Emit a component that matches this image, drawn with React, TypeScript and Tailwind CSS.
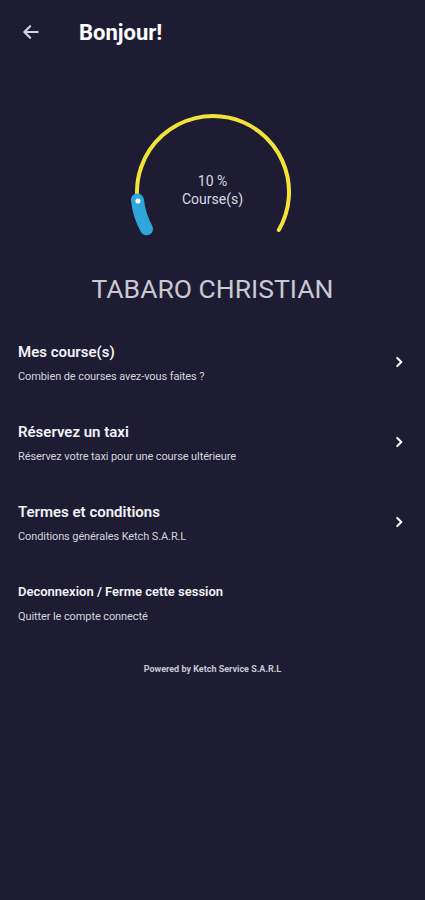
import React from "react";

const items = [
  { t: "Mes course(s)", s: "Combien de courses avez-vous faites ?", chev: true, small: false },
  { t: "Réservez un taxi", s: "Réservez votre taxi pour une course ultérieure", chev: true, small: false },
  { t: "Termes et conditions", s: "Conditions générales Ketch S.A.R.L", chev: true, small: false },
  { t: "Deconnexion / Ferme cette session", s: "Quitter le compte connecté", chev: false, small: true },
];

function pt(cx: number, cy: number, r: number, deg: number) {
  const a = (deg * Math.PI) / 180;
  return [cx + r * Math.cos(a), cy - r * Math.sin(a)];
}

function Gauge() {
  const cx = 80, cy = 80, r = 76;
  const [ys, yy] = pt(cx, cy, r, 186);
  const [ye, yey] = pt(cx, cy, r, -30);
  const [bs, bsy] = pt(cx, cy, r, 209);
  const [be, bey] = pt(cx, cy, r, 186);
  return (
    <svg width="180" height="140" viewBox="-10 -6 180 140">
      <path d={`M ${ys} ${yy} A ${r} ${r} 0 1 1 ${ye} ${yey}`} fill="none" stroke="#f2e33a" strokeWidth="4" strokeLinecap="round" />
      <path d={`M ${bs} ${bsy} A ${r} ${r} 0 0 1 ${be} ${bey}`} fill="none" stroke="#2ea6da" strokeWidth="13" strokeLinecap="round" />
      <circle cx={be + 0.5} cy={bey + 1} r="2.5" fill="#ffffff" />
    </svg>
  );
}

export default function App() {
  return (
    <div className="w-[425px] h-[900px] bg-[#1e1c32] text-white" style={{ fontFamily: "Roboto, 'Liberation Sans', sans-serif" }}>
      <div className="h-[64px] flex items-center pl-[21px]">
        <svg width="20" height="20" viewBox="0 0 24 24" fill="none" stroke="#d4d4e0" strokeWidth="2.6" strokeLinecap="round" strokeLinejoin="round">
          <path d="M20 12H5" />
          <path d="M11 5l-7 7 7 7" />
        </svg>
        <span className="ml-[38px] text-[22px] font-bold text-white">Bonjour!</span>
      </div>
      <div className="flex justify-center mt-[42px]">
        <div className="relative w-[180px] h-[140px]">
          <Gauge />
          <div className="absolute left-0 right-0 top-[66px] flex flex-col items-center text-[14px] leading-[18px] text-[#d8d8e2]">
            <span>10 %</span>
            <span>Course(s)</span>
          </div>
        </div>
      </div>
      <div className="text-center text-[26.5px] text-[#c9c9d4] mt-[28px] leading-[30px]">TABARO CHRISTIAN</div>
      <div className="mt-[38px] flex flex-col">
        {items.map((it) => (
          <div key={it.t} className="h-[80px] flex items-start pl-[18px] pr-[19px]">
            <div className="flex-1 flex flex-col">
              <span className={`${it.small ? "text-[13px]" : "text-[15px]"} font-semibold text-[#f2f2f6] leading-[20px]`}>{it.t}</span>
              <span className="text-[11px] text-[#d4d4dc] mt-[8px] leading-[13px] tracking-[-0.1px]">{it.s}</span>
            </div>
            {it.chev && (
              <svg className="mt-[13px]" width="14" height="14" viewBox="0 0 24 24" fill="none" stroke="#ffffff" strokeWidth="3.5" strokeLinecap="round" strokeLinejoin="round">
                <path d="M9 5l7 7-7 7" />
              </svg>
            )}
          </div>
        ))}
      </div>
      <div className="text-center text-[9px] font-bold text-[#c8c8d4] mt-[1px]">Powered by Ketch Service S.A.R.L</div>
    </div>
  );
}
